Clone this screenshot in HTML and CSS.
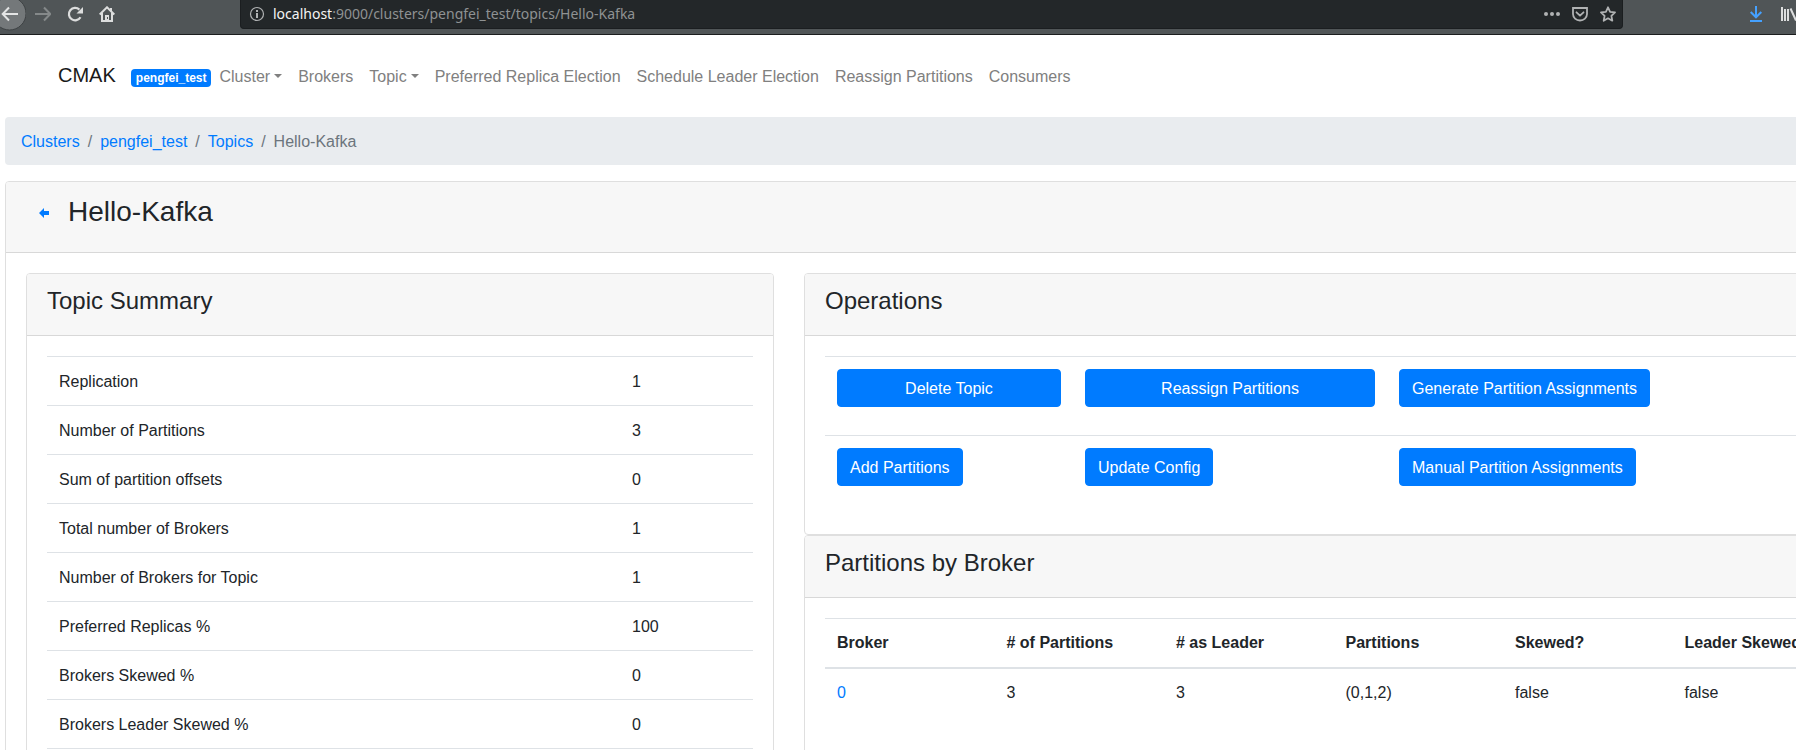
FILE: index.html
```
<!DOCTYPE html>
<html lang="en">
<head>
<meta charset="utf-8">
<title>CMAK - Hello-Kafka</title>
<link rel="stylesheet" href="styles.css">
</head>
<body>
<div class="toolbar">
  <div class="toolbar-nav">
    <button class="tool tool-back" aria-label="Back"><svg width="26" height="31" viewBox="0 0 26 31"><circle cx="9.500" cy="13.500" r="16.500" fill="#74787a" stroke="#3e4244"/><path d="M18 14H3M9 7.500L2.700 14L9 20.500" fill="none" stroke="#e4e5e5" stroke-width="2"/></svg></button>
    <button class="tool" aria-label="Forward"><svg width="16" height="16" viewBox="0 0 16 16"><path d="M0 8h15M9 1.500L15.300 8L9 14.500" fill="none" stroke="#85898a" stroke-width="2"/></svg></button>
    <button class="tool" aria-label="Reload"><svg width="16" height="16" viewBox="0 0 16 16"><path d="M13.500 11.200A6.200 6.200 0 1 1 12.400 3.600" fill="none" stroke="#dcdddd" stroke-width="2.200"/><path d="M16 1v6.500H9.500z" fill="#dcdddd"/></svg></button>
    <button class="tool" aria-label="Home"><svg width="16" height="16" viewBox="0 0 16 16"><path d="M.7 8.500L8 1.300L15.300 8.500M3 7v8h10V7" fill="none" stroke="#dcdddd" stroke-width="2"/><path d="M6 15V9h4v6z" fill="#dcdddd"/><path d="M11 2h2v4l-2-2z" fill="#dcdddd"/><path d="M8 11h1v2H8z" fill="#505557"/></svg></button>
  </div>
  <div class="urlbar">
    <svg width="16" height="16" viewBox="0 0 16 16"><circle cx="8" cy="8" r="6.500" fill="none" stroke="#b0b2b3" stroke-width="1.200"/><path d="M7 4h2v2H7zM7 7h2v5H7z" fill="#b0b2b3"/></svg>
    <div class="url"><span class="host">localhost</span>:9000/clusters/pengfei_test/topics/Hello-Kafka</div>
    <button class="tool" aria-label="Page actions"><svg width="16" height="16" viewBox="0 0 16 16" fill="#b0b2b3"><circle cx="2" cy="8" r="2"/><circle cx="8" cy="8" r="2"/><circle cx="14" cy="8" r="2"/></svg></button>
    <button class="tool" aria-label="Save to Pocket"><svg width="16" height="16" viewBox="0 0 16 16" fill="none" stroke="#b0b2b3" stroke-width="1.800"><path d="M1 2h14v6a7 6.500 0 0 1-14 0z"/><path d="M4.500 6.300L8 9.700l3.500-3.400" stroke-linecap="round" stroke-linejoin="round"/></svg></button>
    <button class="tool" aria-label="Bookmark"><svg width="16" height="16" viewBox="0 0 16 16"><path d="M8 1.300l2.100 4.500 4.900.6-3.600 3.400.9 4.900L8 12.300l-4.300 2.400.9-4.900L1 6.400l4.900-.6z" fill="none" stroke="#b0b2b3" stroke-width="1.800" stroke-linejoin="round"/></svg></button>
  </div>
  <div class="toolbar-end">
    <button class="tool" aria-label="Downloads"><svg width="16" height="16" viewBox="0 0 16 16"><path d="M8 0v11M2.700 6L8 11.300L13.300 6M2 15h12" fill="none" stroke="#45a1ff" stroke-width="2"/></svg></button>
    <button class="tool" aria-label="Library"><svg width="16" height="16" viewBox="0 0 16 16"><path d="M2 1v14M5 3v12M8 3v12M10.500 2.500l5.500 12" fill="none" stroke="#dcdddd" stroke-width="2"/></svg></button>
  </div>
</div>

<div class="viewport">
<div class="page">
  <nav class="navbar">
    <a class="brand" href="#">CMAK</a>
    <span class="badge">pengfei_test</span>
    <a class="nav-link dropdown" href="#">Cluster</a>
    <a class="nav-link" href="#">Brokers</a>
    <a class="nav-link dropdown" href="#">Topic</a>
    <a class="nav-link" href="#">Preferred Replica Election</a>
    <a class="nav-link" href="#">Schedule Leader Election</a>
    <a class="nav-link" href="#">Reassign Partitions</a>
    <a class="nav-link" href="#">Consumers</a>
  </nav>

  <ol class="breadcrumb">
    <li><a href="#">Clusters</a></li>
    <li><a href="#">pengfei_test</a></li>
    <li><a href="#">Topics</a></li>
    <li class="current">Hello-Kafka</li>
  </ol>

  <main class="card card-main">
    <div class="card-header title-row">
      <a class="back-link" href="#" aria-label="Back to topics"><svg width="10" height="10" viewBox="0 0 10 10"><path d="M5 0L0 5l5 5V7h5V3H5z" fill="#007bff"/></svg></a>
      <h1 class="title">Hello-Kafka</h1>
    </div>
    <div class="columns">
      <section class="card">
        <div class="card-header"><h2 class="heading">Topic Summary</h2></div>
        <div class="card-body">
          <table class="table summary">
            <tbody>
              <tr><td>Replication</td><td>1</td></tr>
              <tr><td>Number of Partitions</td><td>3</td></tr>
              <tr><td>Sum of partition offsets</td><td>0</td></tr>
              <tr><td>Total number of Brokers</td><td>1</td></tr>
              <tr><td>Number of Brokers for Topic</td><td>1</td></tr>
              <tr><td>Preferred Replicas %</td><td>100</td></tr>
              <tr><td>Brokers Skewed %</td><td>0</td></tr>
              <tr><td>Brokers Leader Skewed %</td><td>0</td></tr>
            </tbody>
          </table>
        </div>
      </section>

      <div class="stack">
        <section class="card">
          <div class="card-header"><h2 class="heading">Operations</h2></div>
          <div class="card-body">
            <table class="table operations">
              <tbody>
                <tr>
                  <td><button class="btn btn-block">Delete Topic</button></td>
                  <td><button class="btn btn-block">Reassign Partitions</button></td>
                  <td><button class="btn">Generate Partition Assignments</button></td>
                </tr>
                <tr>
                  <td><button class="btn">Add Partitions</button></td>
                  <td><button class="btn">Update Config</button></td>
                  <td><button class="btn">Manual Partition Assignments</button></td>
                </tr>
              </tbody>
            </table>
          </div>
        </section>
        <section class="card card-fill">
          <div class="card-header"><h2 class="heading">Partitions by Broker</h2></div>
          <div class="card-body">
            <table class="table brokers">
              <thead>
                <tr><th>Broker</th><th># of Partitions</th><th># as Leader</th><th>Partitions</th><th>Skewed?</th><th>Leader Skewed?</th></tr>
              </thead>
              <tbody>
                <tr><td><a href="#">0</a></td><td>3</td><td>3</td><td>(0,1,2)</td><td>false</td><td>false</td></tr>
              </tbody>
            </table>
          </div>
        </section>
      </div>
    </div>
  </main>
</div>
</div>
</body>
</html>
```
FILE: styles.css
```
* { box-sizing: border-box; }

body {
  margin: 0;
  height: 100vh;
  display: flex;
  flex-direction: column;
  overflow: hidden;
  background: #fff;
  color: #212529;
  font: 16px/24px "Liberation Sans", Arial, sans-serif;
}

a { color: #007bff; text-decoration: none; }

/* Browser toolbar */
.toolbar {
  flex: none;
  display: flex;
  height: 35px;
  overflow: hidden;
  background: #505557;
  border-bottom: 1px solid #1b1d1e;
}

.toolbar-nav, .toolbar-end {
  flex: none;
  display: flex;
  align-items: center;
  height: 28px;
  gap: 16px;
}

.toolbar-nav { width: 240px; }
.toolbar-end { width: 173px; padding-left: 125px; }

.tool {
  flex: none;
  display: flex;
  padding: 0;
  border: 0;
  background: none;
}

.tool-back { align-self: flex-start; margin-right: -7px; }

.urlbar {
  flex: 1;
  display: flex;
  align-items: center;
  gap: 12px;
  height: 29px;
  padding: 0 6px 0 8px;
  background: #232729;
  border: 1px solid #1b1e20;
  border-top: 0;
  border-radius: 0 0 4px 4px;
}

.url {
  flex: 1;
  margin-left: -4px;
  color: #8f9293;
  font: 14px/24px "Noto Sans", sans-serif;
}

.host { color: #f4f4f4; }

/* The page is wider than the window and runs off its right edge */
.viewport { flex: 1; min-height: 0; overflow: hidden; }
.page { margin: 0 -88px 0 5px; }

.navbar {
  display: flex;
  align-items: baseline;
  height: 82px;
  padding: 25px 0 0 53px;
}

.brand {
  margin-right: 15px;
  color: #191919;
  font-size: 20px;
  line-height: 30px;
}

.badge {
  padding: 3px 5px;
  border-radius: 4px;
  background: #007bff;
  color: #fff;
  font-size: 12px;
  font-weight: 700;
  line-height: 12px;
}

.nav-link { padding: 0 8px; color: #808080; }

.dropdown::after {
  content: "";
  display: inline-block;
  margin-left: 4px;
  vertical-align: 4px;
  border: 4px solid transparent;
  border-top-color: currentColor;
  border-bottom: 0;
}

.breadcrumb {
  display: flex;
  margin: 0 0 16px;
  padding: 13px 16px 11px;
  border-radius: 4px;
  background: #e9ecef;
  list-style: none;
}

.breadcrumb li + li::before {
  content: "/";
  padding: 0 8px;
  color: #6c757d;
}

.current { color: #6c757d; }

/* Cards */
.card {
  border: 1px solid #dfdfdf;
  border-radius: 4px;
  background: #fff;
}

.card-header {
  padding: 12px 20px;
  border-bottom: 1px solid #d8d8d8;
  border-radius: 3px 3px 0 0;
  background: #f7f7f7;
}

.title-row { display: flex; padding-left: 33px; gap: 19px; }
.back-link { display: flex; align-items: center; height: 38px; }

.title {
  margin: 0 0 10px;
  font-size: 28px;
  font-weight: 400;
  line-height: 36px;
}

.heading {
  margin: 0 0 8px;
  font-size: 24px;
  font-weight: 400;
  line-height: 29px;
}

.card-body { padding: 20px; }

.columns {
  display: grid;
  grid-template-columns: 748fr 1059fr;
  gap: 30px;
  padding: 20px;
}

.stack { display: flex; flex-direction: column; }
.card-fill { flex: 1; }

/* Tables */
.table {
  width: 100%;
  border-collapse: separate;
  border-spacing: 0;
  table-layout: fixed;
}

.table td, .table th {
  padding: 12px;
  border-top: 1px solid #dee2e6;
  text-align: left;
  vertical-align: top;
}

.summary td:last-child { width: 133px; }
.table.summary td { padding: 13px 12px 11px; }
.summary tr:last-child td { border-bottom: 1px solid #dee2e6; }

.operations td:nth-child(1) { width: 248px; }
.operations td:nth-child(2) { width: 314px; }

.brokers th { border-bottom: 2px solid #dee2e6; }
.table.brokers tbody td { border-top: 0; }

.btn {
  display: block;
  margin: 0 0 16px;
  padding: 7px 12px 5px;
  border: 1px solid #007bff;
  border-radius: 4px;
  background: #007bff;
  color: #fff;
  font: inherit;
}

.btn-block { width: 100%; }
```
